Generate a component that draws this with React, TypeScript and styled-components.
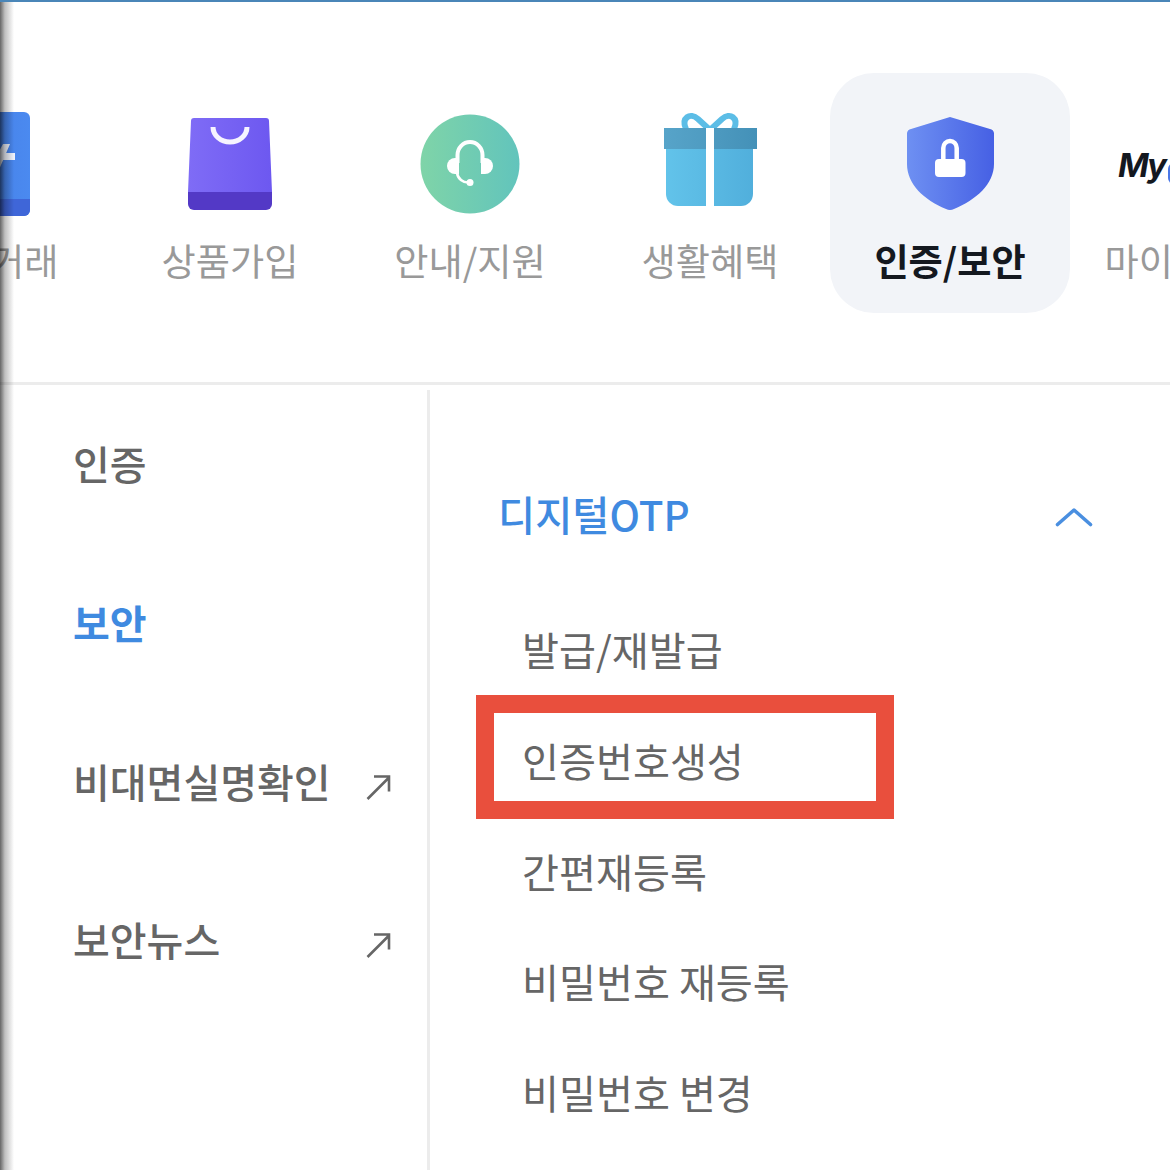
import styled, { createGlobalStyle } from "styled-components";

const GlobalStyle = createGlobalStyle`
  html, body {
    margin: 0;
    padding: 0;
    background: #fff;
  }
  body {
    font-family: "Noto Sans CJK KR", "Noto Sans", sans-serif;
  }
`;

const subMenus = ["발급/재발급", "인증번호생성", "간편재등록", "비밀번호 재등록", "비밀번호 변경"];

function TransferIcon() {
  return (
    <svg width="240" height="110" viewBox="0 0 240 110">
      <defs>
        <linearGradient id="transferFill" x1="0" y1="0" x2="1" y2="0">
          <stop offset="0" stopColor="#3f74dc" />
          <stop offset="1" stopColor="#4b8af0" />
        </linearGradient>
      </defs>
      <path d="M60 2H154a6 6 0 0 1 6 6V100a6 6 0 0 1-6 6H60z" fill="url(#transferFill)" />
      <path d="M60 89H160V100a6 6 0 0 1-6 6H60z" fill="#3f66d8" />
      <path d="M133 34H140L128 62H118z M120 43H145V50H120z" fill="#eef2fb" />
    </svg>
  );
}

function BagIcon() {
  return (
    <svg width="240" height="110" viewBox="0 0 240 110">
      <defs>
        <linearGradient id="bagFill" x1="0" y1="0" x2="1" y2="0">
          <stop offset="0" stopColor="#7f6cf6" />
          <stop offset="1" stopColor="#6d58f0" />
        </linearGradient>
      </defs>
      <path d="M84 8H156a3 3 0 0 1 3 3L162 82H78L81 11a3 3 0 0 1 3-3z" fill="url(#bagFill)" />
      <path d="M78 82H162V94a6 6 0 0 1-6 6H84a6 6 0 0 1-6-6z" fill="#5339c6" />
      <path d="M103 17a17 15 0 0 0 34 0" fill="none" stroke="#f6f4ff" strokeWidth="5" />
    </svg>
  );
}

function SupportIcon() {
  return (
    <svg width="240" height="110" viewBox="0 0 240 110">
      <defs>
        <linearGradient id="supportFill" x1="0" y1="0" x2="1" y2="0">
          <stop offset="0" stopColor="#7fd4a8" />
          <stop offset="1" stopColor="#62c4bc" />
        </linearGradient>
      </defs>
      <circle cx="120" cy="54" r="49.5" fill="url(#supportFill)" />
      <path d="M107.5 53V45a12.5 13 0 0 1 25 0V53" fill="none" stroke="#fff" strokeWidth="4" />
      <path d="M109 48H105a8 8 0 0 0 0 16H109z" fill="#fff" />
      <path d="M131 48H135a8 8 0 0 1 0 16H131z" fill="#fff" />
      <path d="M107 63C108 69 113 72.500 118 72.500" fill="none" stroke="#fff" strokeWidth="2.600" />
      <circle cx="120" cy="72.500" r="3.500" fill="#fff" />
    </svg>
  );
}

function GiftIcon() {
  return (
    <svg width="240" height="110" viewBox="0 0 240 110">
      <defs>
        <linearGradient id="giftBody" x1="0" y1="0" x2="1" y2="0">
          <stop offset="0" stopColor="#62c3ea" />
          <stop offset="1" stopColor="#51afdc" />
        </linearGradient>
        <linearGradient id="giftLid" x1="0" y1="0" x2="1" y2="0">
          <stop offset="0" stopColor="#57a4c9" />
          <stop offset="1" stopColor="#4491b8" />
        </linearGradient>
      </defs>
      <path d="M120 20L108 9C100 2 91 8 96 19M120 20L132 9C140 2 149 8 144 19" fill="none" stroke="#5cbde6" strokeWidth="6" />
      <rect x="74" y="18" width="93" height="21" fill="url(#giftLid)" />
      <path d="M76 39H163V84a12 12 0 0 1-12 12H88a12 12 0 0 1-12-12z" fill="url(#giftBody)" />
      <rect x="116" y="18" width="8" height="78" fill="#fff" />
    </svg>
  );
}

function ShieldIcon() {
  return (
    <svg width="240" height="110" viewBox="0 0 240 110">
      <defs>
        <linearGradient id="shieldFill" x1="0" y1="0" x2="1" y2="0">
          <stop offset="0" stopColor="#6e90f2" />
          <stop offset="1" stopColor="#4660e4" />
        </linearGradient>
      </defs>
      <path d="M120 7L160 19a5 5 0 0 1 4 4V54C164 74 146 90 124 99a9 9 0 0 1-8 0C94 90 77 74 77 54V23a5 5 0 0 1 4-4z" fill="url(#shieldFill)" />
      <path d="M113.300 51V38a6.700 7 0 0 1 13.400 0V51" fill="none" stroke="#fff" strokeWidth="4.500" />
      <rect x="105" y="49" width="30.500" height="18" rx="4" fill="#fff" />
    </svg>
  );
}

function ExternalArrow() {
  return (
    <ArrowMark width="25" height="26" viewBox="0 0 25 26">
      <path d="M1.500 25L23 3.500M8 2.500H23V17.500" fill="none" stroke="#666" strokeWidth="2.600" />
    </ArrowMark>
  );
}

export default function App() {
  return (
    <Page>
      <GlobalStyle />
      <TopLine />
      <TabStrip>
        <Tab>
          <TransferIcon />
          <TabLabel>이체거래</TabLabel>
        </Tab>
        <Tab>
          <BagIcon />
          <TabLabel>상품가입</TabLabel>
        </Tab>
        <Tab>
          <SupportIcon />
          <TabLabel>안내/지원</TabLabel>
        </Tab>
        <Tab>
          <GiftIcon />
          <TabLabel>생활혜택</TabLabel>
        </Tab>
        <Tab $active>
          <ShieldIcon />
          <TabLabel $active>인증/보안</TabLabel>
        </Tab>
        <Tab>
          <MyLogo>
            My<MyAccent />
          </MyLogo>
          <TabLabel>마이페이지</TabLabel>
        </Tab>
      </TabStrip>
      <Content>
        <SideMenu>
          <SideItem>인증</SideItem>
          <SideItem $active>보안</SideItem>
          <SideItem>
            비대면실명확인
            <ExternalArrow />
          </SideItem>
          <SideItem>
            보안뉴스
            <ExternalArrow />
          </SideItem>
        </SideMenu>
        <DetailPanel>
          <DetailHeader>
            <DetailTitle>디지털OTP</DetailTitle>
            <Chevron width="38" height="20" viewBox="0 0 38 20">
              <path d="M2.500 17.500L19 3L35.500 17.500" fill="none" stroke="#4a8fe0" strokeWidth="3.600" strokeLinecap="round" strokeLinejoin="round" />
            </Chevron>
          </DetailHeader>
          <SubList>
            {subMenus.map((label, i) => (
              <SubItem key={label}>
                {label}
                {i === 1 && <HighlightBox />}
              </SubItem>
            ))}
          </SubList>
        </DetailPanel>
      </Content>
      <EdgeShadow />
    </Page>
  );
}

const Page = styled.div`
  position: relative;
  width: 1170px;
  height: 1170px;
  overflow: hidden;
  background: #fff;
`;

const TopLine = styled.div`
  height: 2px;
  background: #4a86b8;
`;

const TabStrip = styled.div`
  display: flex;
  margin-left: -130px;
  padding: 71px 0 69px;
  border-bottom: 3px solid #ececec;
`;

const Tab = styled.div<{ $active?: boolean }>`
  flex: 0 0 240px;
  height: 240px;
  box-sizing: border-box;
  padding-top: 37px;
  display: flex;
  flex-direction: column;
  align-items: center;
  border-radius: 44px;
  background: ${(props) => (props.$active ? "#f2f4f8" : "transparent")};
`;

const TabLabel = styled.div<{ $active?: boolean }>`
  margin-top: 15px;
  font-size: 37.2px;
  line-height: 50px;
  white-space: nowrap;
  font-weight: ${(props) => (props.$active ? 700 : 400)};
  color: ${(props) => (props.$active ? "#14181f" : "#999")};
`;

const MyLogo = styled.div`
  width: 240px;
  height: 110px;
  box-sizing: border-box;
  padding-left: 48px;
  display: flex;
  align-items: center;
  gap: 3px;
  font-family: "Inter", sans-serif;
  font-size: 33px;
  font-weight: 700;
  font-style: italic;
  letter-spacing: -2px;
  color: #14181f;
`;

const MyAccent = styled.span`
  width: 14px;
  height: 21px;
  margin-top: 16px;
  border-radius: 6px 0 0 6px;
  background: #4a78e8;
`;

const Content = styled.div`
  display: flex;
  padding-top: 5px;
`;

const SideMenu = styled.div`
  flex: 0 0 430px;
  box-sizing: border-box;
  padding: 25px 0 0 73px;
  border-right: 3px solid #ececec;
  height: 780px;
`;

const SideItem = styled.div<{ $active?: boolean }>`
  position: relative;
  height: 158.8px;
  font-size: 40px;
  line-height: 96px;
  white-space: nowrap;
  font-weight: ${(props) => (props.$active ? 700 : 500)};
  color: ${(props) => (props.$active ? "#3f8ae0" : "#666")};
`;

const ArrowMark = styled.svg`
  position: absolute;
  left: 293px;
  top: 41px;
`;

const DetailPanel = styled.div`
  flex: 1;
  padding: 0 77px 0 68px;
`;

const DetailHeader = styled.div`
  display: flex;
  align-items: center;
  justify-content: space-between;
  height: 120px;
  margin-top: 64px;
`;

const DetailTitle = styled.div`
  margin-bottom: 2px;
  font-size: 40.4px;
  font-weight: 500;
  color: #3f8ae0;
`;

const Chevron = styled.svg`
  margin-top: 6px;
`;

const SubList = styled.div`
  padding: 20px 0 0 24px;
`;

const SubItem = styled.div`
  position: relative;
  height: 110.8px;
  line-height: 110.8px;
  font-size: 40.2px;
  color: #666;
  white-space: nowrap;
`;

const HighlightBox = styled.div`
  position: absolute;
  left: -46px;
  top: -10px;
  width: 418px;
  height: 124px;
  box-sizing: border-box;
  border: 18px solid #e94f3d;
`;

const EdgeShadow = styled.div`
  position: absolute;
  left: 0;
  top: 2px;
  bottom: 0;
  width: 14px;
  background: linear-gradient(to right, rgba(0, 0, 0, 0.6), rgba(0, 0, 0, 0.25) 35%, rgba(0, 0, 0, 0));
`;
